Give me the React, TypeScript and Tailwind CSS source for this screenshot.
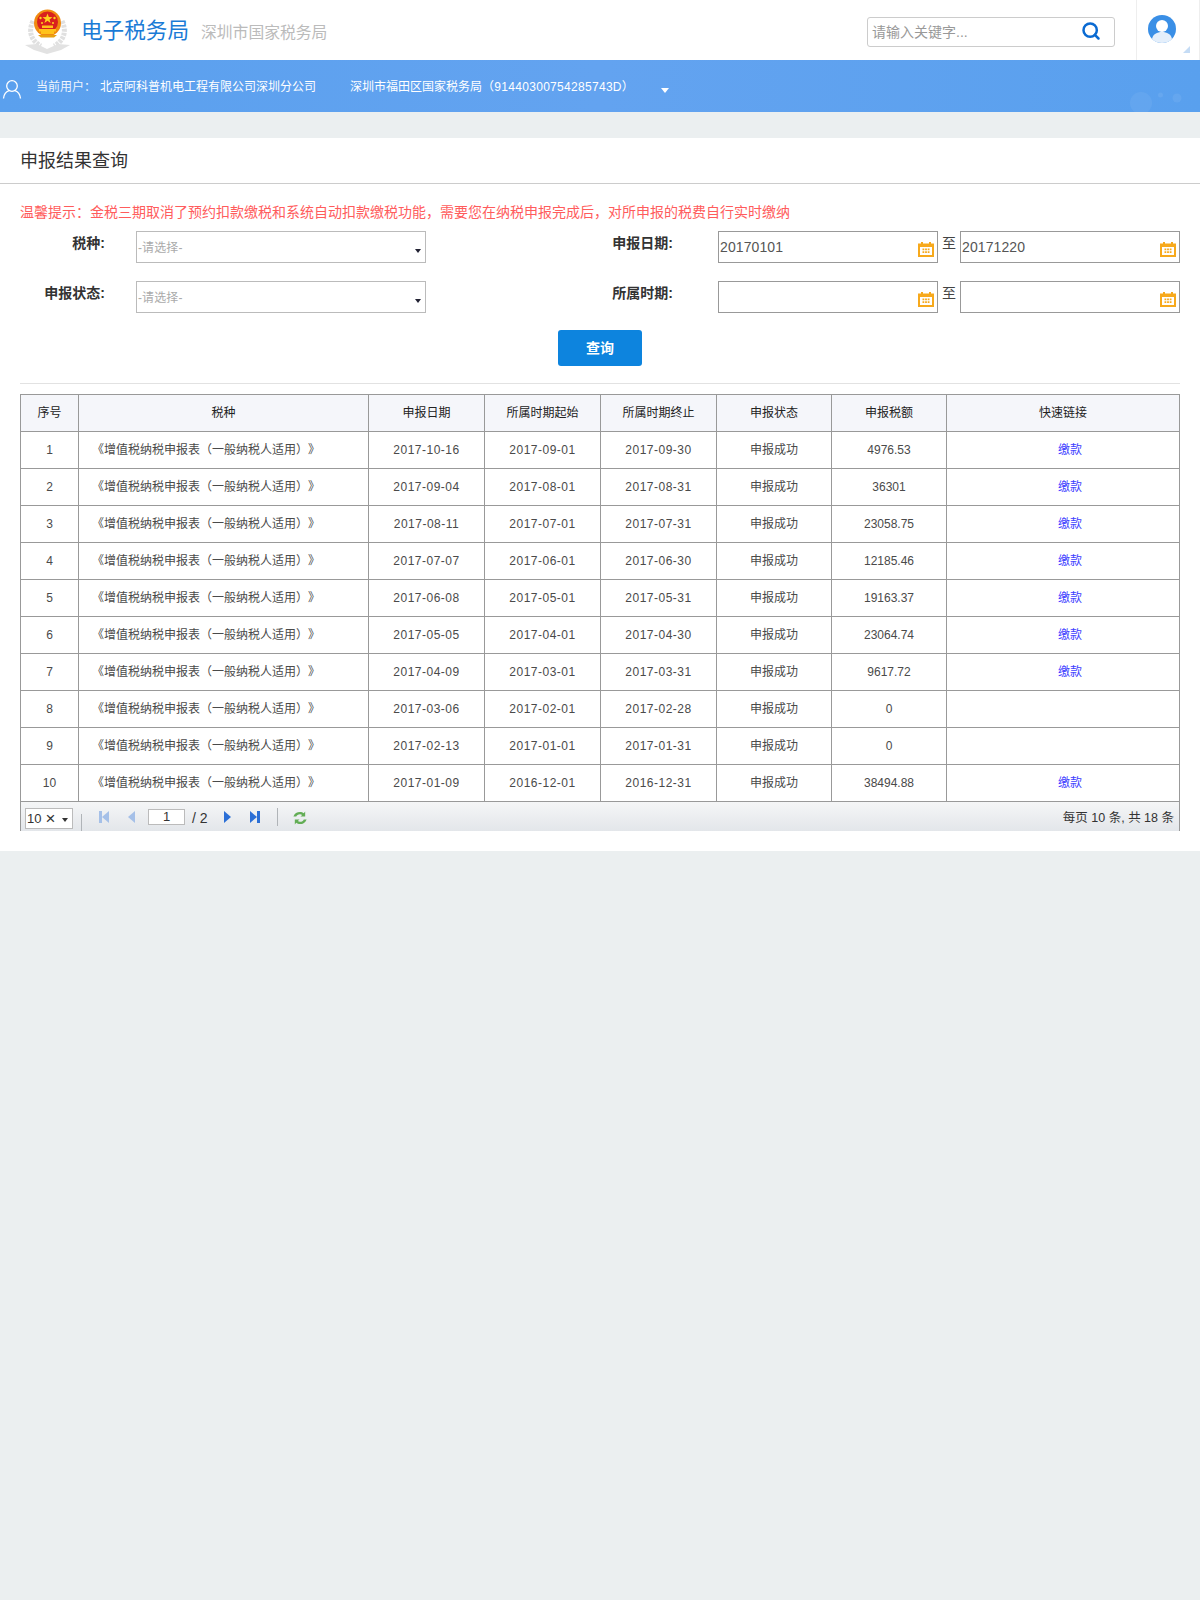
import React from "react";
import { Search } from "lucide-react";

const FONT = "[font-family:'Liberation_Sans','Noto_Sans_CJK_SC',sans-serif] [text-spacing-trim:space-all]";

const TAX_NAME = "《增值税纳税申报表（一般纳税人适用）》";

const rows = [
  { id: 1, date: "2017-10-16", start: "2017-09-01", end: "2017-09-30", amount: "4976.53", pay: true },
  { id: 2, date: "2017-09-04", start: "2017-08-01", end: "2017-08-31", amount: "36301", pay: true },
  { id: 3, date: "2017-08-11", start: "2017-07-01", end: "2017-07-31", amount: "23058.75", pay: true },
  { id: 4, date: "2017-07-07", start: "2017-06-01", end: "2017-06-30", amount: "12185.46", pay: true },
  { id: 5, date: "2017-06-08", start: "2017-05-01", end: "2017-05-31", amount: "19163.37", pay: true },
  { id: 6, date: "2017-05-05", start: "2017-04-01", end: "2017-04-30", amount: "23064.74", pay: true },
  { id: 7, date: "2017-04-09", start: "2017-03-01", end: "2017-03-31", amount: "9617.72", pay: true },
  { id: 8, date: "2017-03-06", start: "2017-02-01", end: "2017-02-28", amount: "0", pay: false },
  { id: 9, date: "2017-02-13", start: "2017-01-01", end: "2017-01-31", amount: "0", pay: false },
  { id: 10, date: "2017-01-09", start: "2016-12-01", end: "2016-12-31", amount: "38494.88", pay: true },
];

const headers = ["序号", "税种", "申报日期", "所属时期起始", "所属时期终止", "申报状态", "申报税额", "快速链接"];
const colWidths = ["w-[58px]", "w-[290px]", "w-[116px]", "w-[116px]", "w-[116px]", "w-[115px]", "w-[115px]", "w-[233px]"];

const Emblem = () => (
  <svg width="46" height="46" viewBox="0 0 46 46" className="mt-[4px] shrink-0">
    {/* wreath */}
    <path d="M8 12 C3 22 6 32 16 37" stroke="#e0e0e0" strokeWidth="5" strokeDasharray="3 1" fill="none" />
    <path d="M37 12 C42 22 39 32 29 37" stroke="#e0e0e0" strokeWidth="5" strokeDasharray="3 1" fill="none" />
    <path d="M0 36 L12 35 L22 40 L33 35 L45 36 L36 41 L22 45 L9 41z" fill="#e2e2e2" />
    {/* emblem */}
    <circle cx="22.500" cy="14" r="13.500" fill="#f08a10" />
    <circle cx="22.500" cy="13" r="10.500" fill="#d9201e" />
    <path d="M22.500 4.500l1.300 3.600 3.700.1-3 2.200 1.100 3.600-3.100-2.200-3.100 2.200 1.100-3.600-3-2.200 3.700-.1z" fill="#ffd21e" />
    <circle cx="15.500" cy="9" r="1.200" fill="#ffd21e" />
    <circle cx="29.500" cy="9" r="1.200" fill="#ffd21e" />
    <circle cx="17" cy="14" r="1" fill="#ffd21e" />
    <circle cx="28" cy="14" r="1" fill="#ffd21e" />
    <path d="M14 20h17v2.500h-2V25h-13v-2.500h-2zM17 16.500h11V19H17z" fill="#ffc21a" />
    <path d="M13 26h19l-3 2.500H16z" fill="#e8a010" />
  </svg>
);

const UserOutline = () => (
  <svg width="20" height="20" viewBox="0 0 20 20" fill="none" stroke="#fff" strokeWidth="1.300" className="mt-[3px] shrink-0">
    <circle cx="10" cy="7" r="5.300" />
    <path d="M1.500 19.500c.5-4.500 3-7 5.500-7.800M18.500 19.500c-.5-4.500-3-7-5.500-7.800" />
  </svg>
);

const Avatar = () => (
  <svg width="28" height="28" viewBox="0 0 28 28">
    <circle cx="14" cy="14" r="14" fill="#3a8fe6" />
    <circle cx="14" cy="11" r="6" fill="#fff" />
    <path d="M4 24c1-5 5-7 10-7s9 2 10 7c-2.500 2.800-6 4-10 4s-7.500-1.200-10-4z" fill="#e4effb" />
  </svg>
);

const Bubbles = () => (
  <svg width="90" height="52" viewBox="0 0 90 52" className="absolute top-0 right-0">
    <circle cx="31" cy="43" r="11" fill="#fff" fillOpacity="0.06" />
    <circle cx="50.500" cy="35" r="2.500" fill="#fff" fillOpacity="0.08" />
    <circle cx="67" cy="38" r="4.500" fill="#fff" fillOpacity="0.07" />
  </svg>
);

const Calendar = () => (
  <svg width="16" height="15" viewBox="0 0 16 15" className="absolute top-[10px] right-[3px]">
    <rect x="0" y="1.500" width="16" height="13.500" fill="#f7a91c" />
    <rect x="3" y="0" width="2" height="2" fill="#f7a91c" />
    <rect x="11" y="0" width="2" height="2" fill="#f7a91c" />
    <rect x="2" y="5" width="12" height="8" fill="#fff" />
    <path d="M4.500 6.500h1.800v1.800H4.500zM7.100 6.500h1.800v1.800H7.100zM9.700 6.500h1.800v1.800H9.700zM4.500 9.200h1.800V11H4.500zM7.100 9.200h1.800V11H7.100zM9.700 9.200h1.800V11H9.700z" fill="#f7a91c" />
  </svg>
);

const Caret = ({ className }: { className: string }) => (
  <span className={`absolute h-0 w-0 border-x-[3.5px] border-t-[4px] border-x-transparent ${className}`} />
);

const SelectField = () => (
  <div className="relative flex h-[32px] w-[290px] shrink-0 items-center border border-[#bbb] pt-[1px] pl-[1px] text-[12px] tracking-[0.1px] text-[#aaa]">
    -请选择-
    <Caret className="right-[4px] bottom-[9px] border-t-[#223]" />
  </div>
);

const DateField = ({ value }: { value?: string }) => (
  <div className="relative flex h-[32px] w-[220px] shrink-0 items-center border border-[#999] pl-[1px] text-[14px] tracking-[0.1px] text-[#555]">
    {value}
    <Calendar />
  </div>
);

const FormLabel = ({ className, children }: { className: string; children: React.ReactNode }) => (
  <div className={`h-[24px] shrink-0 text-right text-[14px] leading-[24px] font-bold text-[#333] ${className}`}>{children}</div>
);

const FormRow = ({ left, right, from, to }: { left: string; right: string; from?: string; to?: string }) => (
  <div className="flex items-start">
    <FormLabel className="w-[85px]">{left}</FormLabel>
    <div className="ml-[31px]">
      <SelectField />
    </div>
    <FormLabel className="w-[247px]">{right}</FormLabel>
    <div className="ml-[45px]">
      <DateField value={from} />
    </div>
    <div className="w-[22px] text-center text-[14px] leading-[24px] text-[#444]">至</div>
    <DateField value={to} />
  </div>
);

const PagerIcon = ({ w, d, fill, bar, className }: { w: number; d: string; fill: string; bar?: number; className: string }) => (
  <svg width={w} height="12" viewBox={`0 0 ${w} 12`} className={`mt-[9px] shrink-0 ${className}`}>
    {bar !== undefined && <rect x={bar} y="0" width="3" height="12" fill={fill} />}
    <path d={d} fill={fill} />
  </svg>
);

const Refresh = () => (
  <svg width="16" height="16" viewBox="0 0 17 17" className="mt-[8px] ml-[14px] shrink-0">
    <path d="M1.500 7C2.500 3.500 5.500 2 8.500 2c1.500 0 3 .5 4 1.500L14 1.500V7H9l1.800-1.800C10 4.700 9.300 4.500 8.500 4.500c-2 0-3.500 1-4 2.500z" fill="#62ad55" />
    <path d="M15.500 10c-1 3.500-4 5-7 5-1.500 0-3-.5-4-1.500L3 15.500V10h5l-1.800 1.800c.8.500 1.500.7 2.300.7 2 0 3.500-1 4-2.500z" fill="#62ad55" />
  </svg>
);

const Pager = () => (
  <div className="flex h-[29px] items-start border-x border-[#999] bg-gradient-to-b from-[#f5f6f7] to-[#e3e6ea] text-[#333]">
    <div className="relative mt-[6px] ml-[4px] flex h-[21px] w-[48px] shrink-0 items-center border border-[#bbb] bg-white pl-[1px] text-[13px]">
      10
      <span className="ml-[4px] text-[17px] leading-none">×</span>
      <Caret className="right-[4px] bottom-[6px] border-t-[#333]" />
    </div>
    <div className="mt-[12px] ml-[8px] h-[17px] w-px shrink-0 bg-[#b0b4b8]" />
    <PagerIcon w={10} d="M10 0v12L3 6z" fill="#a5c0e8" bar={0} className="ml-[17px]" />
    <PagerIcon w={7} d="M7 0v12L0 6z" fill="#a5c0e8" className="ml-[19px]" />
    <div className="mt-[7px] ml-[13px] flex h-[16px] w-[37px] shrink-0 items-center justify-center border border-[#bbb] bg-white text-[13px]">1</div>
    <span className="mt-[7px] ml-[7px] w-[16px] shrink-0 text-[14px] leading-[18px]">/ 2</span>
    <PagerIcon w={7} d="M0 0v12l7-6z" fill="#2b6fd6" className="ml-[16px]" />
    <PagerIcon w={10} d="M0 0v12l7-6z" fill="#2b6fd6" bar={7} className="ml-[19px]" />
    <div className="mt-[6px] ml-[17px] h-[18px] w-px shrink-0 bg-[#b0b4b8]" />
    <Refresh />
    <div className="mt-[7px] ml-auto pr-[5px] text-[12.500px] leading-[18px]">每页 10 条, 共 18 条</div>
  </div>
);

export default function App() {
  return (
    <div className={`min-h-screen bg-[#ebeff0] ${FONT}`}>
      <header className="flex h-[60px] items-center bg-white pl-[25px]">
        <Emblem />
        <span className="mt-[2px] ml-[10px] text-[21.600px] leading-none text-[#1a7bd6]">电子税务局</span>
        <span className="mt-[6px] ml-[12px] text-[15.800px] leading-none text-[#bbb]">深圳市国家税务局</span>
        <div className="relative mt-[4px] mr-[21px] ml-auto flex h-[30px] w-[248px] items-center rounded-[3px] border border-[#ccc] pl-[4px] text-[14px] text-[#999]">
          请输入关键字...
          <Search size={20} strokeWidth={3} className="absolute top-[3px] right-[13px] text-[#0a6ad2]" />
        </div>
        <div className="relative flex h-[60px] w-[64px] shrink-0 justify-center border-x border-[#eee] pt-[15px] pr-[13px]">
          <Avatar />
          <span className="absolute right-[9px] bottom-[7px] h-0 w-0 border-b-[7px] border-l-[7px] border-b-[#c5dcf5] border-l-transparent" />
        </div>
      </header>

      <div className="relative flex h-[52px] items-center overflow-hidden bg-gradient-to-r from-[#5aa0ee] via-[#63a3f0] to-[#59a0ee] pt-[2px] pl-[2px] text-[12px] text-white">
        <UserOutline />
        <span className="ml-[14px] w-[84px] opacity-90">当前用户：</span>
        <span className="ml-[-20px] w-[250px]">北京阿科普机电工程有限公司深圳分公司</span>
        <span>
          深圳市福田区国家税务局<span className="tracking-[0.3px]">（91440300754285743D）</span>
        </span>
        <span className="mt-[6px] ml-[27px] h-0 w-0 border-x-[4px] border-t-[5px] border-x-transparent border-t-white" />
        <Bubbles />
      </div>

      <main className="mt-[26px] bg-white pb-[20px]">
        <div className="flex h-[46px] items-center border-b border-[#ccc] pt-[2px] pl-5 text-[18px] text-[#333]">申报结果查询</div>
        <div className="px-5">
          <p className="pt-[18px] pb-[9px] text-[14px] leading-[20px] text-[#ff5c5c]">
            温馨提示：金税三期取消了预约扣款缴税和系统自动扣款缴税功能，需要您在纳税申报完成后，对所申报的税费自行实时缴纳
          </p>
          <div className="flex flex-col gap-[18px]">
            <FormRow left="税种:" right="申报日期:" from="20170101" to="20171220" />
            <FormRow left="申报状态:" right="所属时期:" />
          </div>
          <div className="mt-[17px] flex justify-center">
            <button className="h-[36px] w-[84px] rounded-[3px] bg-[#0d84de] text-[14px] font-bold text-white">查询</button>
          </div>
          <div className="mt-[17px] h-px bg-[#e2e2e2]" />
          <table className="mt-[10px] w-[1159px] table-fixed border-collapse text-center text-[12px] text-[#4a4a4a]">
            <colgroup>
              {colWidths.map((w, i) => (
                <col key={i} className={w} />
              ))}
            </colgroup>
            <thead>
              <tr className="h-[37px] bg-[#f5f6fa] text-[#222]">
                {headers.map((h) => (
                  <th key={h} className="border border-[#999] font-normal">
                    {h}
                  </th>
                ))}
              </tr>
            </thead>
            <tbody>
              {rows.map((r) => (
                <tr key={r.id} className="h-[37px]">
                  <td className="border border-[#999]">{r.id}</td>
                  <td className="border border-[#999] pl-[13px] text-left">{TAX_NAME}</td>
                  <td className="border border-[#999] tracking-[0.5px]">{r.date}</td>
                  <td className="border border-[#999] tracking-[0.5px]">{r.start}</td>
                  <td className="border border-[#999] tracking-[0.5px]">{r.end}</td>
                  <td className="border border-[#999]">申报成功</td>
                  <td className="border border-[#999]">{r.amount}</td>
                  <td className="border border-[#999] pl-[14px] text-[#4040ff]">{r.pay ? "缴款" : ""}</td>
                </tr>
              ))}
            </tbody>
          </table>
          <Pager />
        </div>
      </main>
    </div>
  );
}
